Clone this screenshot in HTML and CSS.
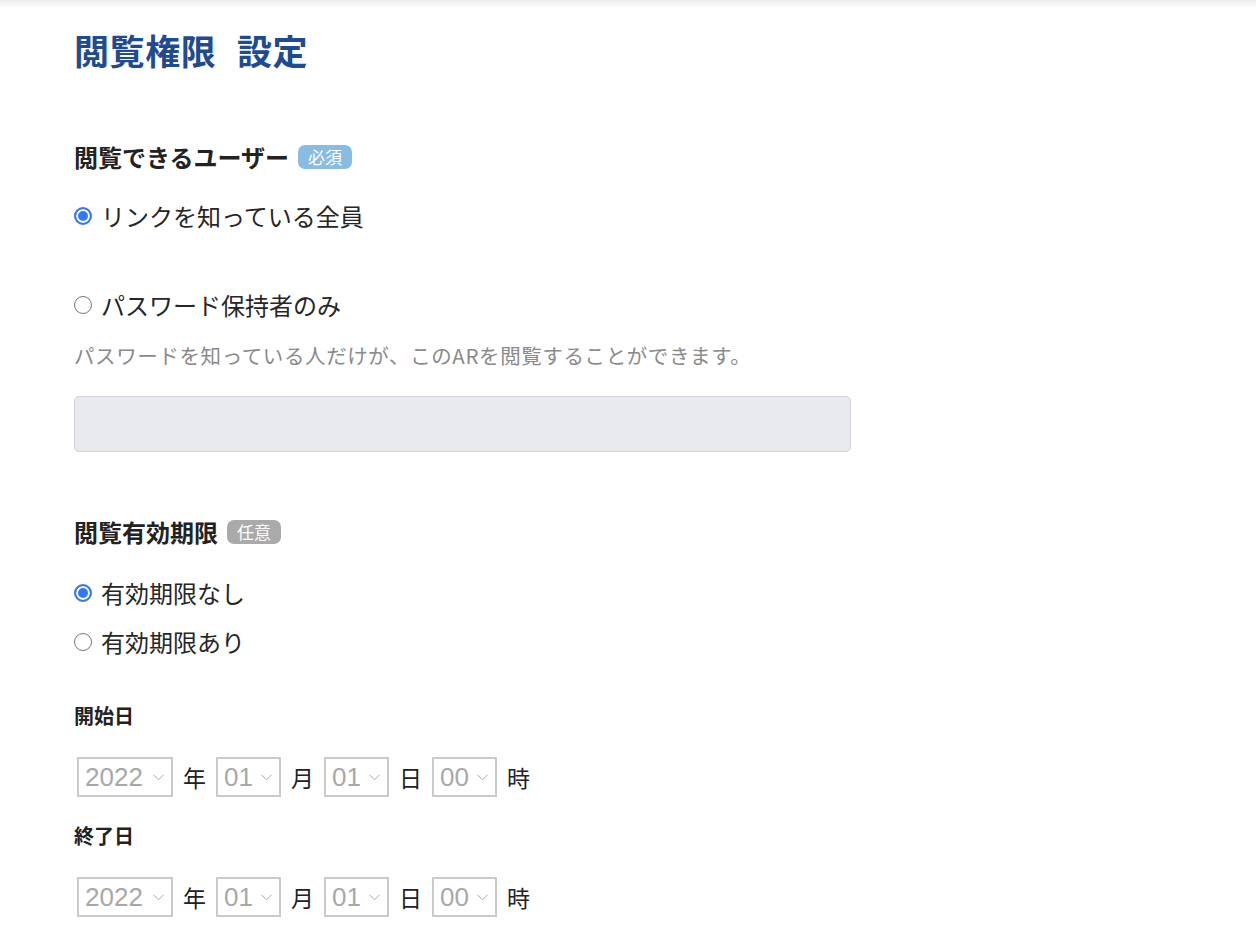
FILE: index.html
```html
<!DOCTYPE html>
<html lang="ja">
<head>
<meta charset="utf-8">
<title>閲覧権限 設定</title>
<link rel="stylesheet" href="styles.css">
</head>
<body>
<div class="top-shade"></div>
<main class="page">
  <h1 class="title">閲覧権限 設定</h1>

  <section class="section">
    <h2 class="heading">閲覧できるユーザー<span class="badge badge-required">必須</span></h2>
    <label class="radio radio-first"><input type="radio" name="viewer" checked><span>リンクを知っている全員</span></label>
    <label class="radio radio-pass"><input type="radio" name="viewer"><span>パスワード保持者のみ</span></label>
    <p class="desc">パスワードを知っている人だけが、このARを閲覧することができます。</p>
    <input class="text-input" type="text" disabled>
  </section>

  <section class="section section-expiry">
    <h2 class="heading">閲覧有効期限<span class="badge badge-optional">任意</span></h2>
    <label class="radio radio-first2"><input type="radio" name="expiry" checked><span>有効期限なし</span></label>
    <label class="radio radio-second2"><input type="radio" name="expiry"><span>有効期限あり</span></label>

    <h3 class="sub-label sub-start">開始日</h3>
    <div class="date-row">
      <div class="select select-year"><span class="val">2022</span><svg class="chev" width="11" height="7" viewBox="0 0 11 7"><polyline points="0.5,0.8 5.5,5.8 10.5,0.8" fill="none" stroke="#a8a8a8" stroke-width="1"/></svg></div>
      <span class="unit">年</span>
      <div class="select"><span class="val">01</span><svg class="chev" width="11" height="7" viewBox="0 0 11 7"><polyline points="0.5,0.8 5.5,5.8 10.5,0.8" fill="none" stroke="#a8a8a8" stroke-width="1"/></svg></div>
      <span class="unit">月</span>
      <div class="select"><span class="val">01</span><svg class="chev" width="11" height="7" viewBox="0 0 11 7"><polyline points="0.5,0.8 5.5,5.8 10.5,0.8" fill="none" stroke="#a8a8a8" stroke-width="1"/></svg></div>
      <span class="unit">日</span>
      <div class="select"><span class="val">00</span><svg class="chev" width="11" height="7" viewBox="0 0 11 7"><polyline points="0.5,0.8 5.5,5.8 10.5,0.8" fill="none" stroke="#a8a8a8" stroke-width="1"/></svg></div>
      <span class="unit">時</span>
    </div>

    <h3 class="sub-label sub-end">終了日</h3>
    <div class="date-row">
      <div class="select select-year"><span class="val">2022</span><svg class="chev" width="11" height="7" viewBox="0 0 11 7"><polyline points="0.5,0.8 5.5,5.8 10.5,0.8" fill="none" stroke="#a8a8a8" stroke-width="1"/></svg></div>
      <span class="unit">年</span>
      <div class="select"><span class="val">01</span><svg class="chev" width="11" height="7" viewBox="0 0 11 7"><polyline points="0.5,0.8 5.5,5.8 10.5,0.8" fill="none" stroke="#a8a8a8" stroke-width="1"/></svg></div>
      <span class="unit">月</span>
      <div class="select"><span class="val">01</span><svg class="chev" width="11" height="7" viewBox="0 0 11 7"><polyline points="0.5,0.8 5.5,5.8 10.5,0.8" fill="none" stroke="#a8a8a8" stroke-width="1"/></svg></div>
      <span class="unit">日</span>
      <div class="select"><span class="val">00</span><svg class="chev" width="11" height="7" viewBox="0 0 11 7"><polyline points="0.5,0.8 5.5,5.8 10.5,0.8" fill="none" stroke="#a8a8a8" stroke-width="1"/></svg></div>
      <span class="unit">時</span>
    </div>
  </section>
</main>
</body>
</html>
```

FILE: styles.css
```css
* { box-sizing: border-box; }

html, body {
  margin: 0;
  padding: 0;
  background: #ffffff;
}

body {
  font-family: "Noto Sans CJK JP", "Noto Sans", sans-serif;
  color: #222222;
  overflow: hidden;
}

.top-shade {
  height: 8px;
  background: linear-gradient(#ececec, rgba(255,255,255,0));
  margin-bottom: -8px;
}

.page {
  padding: 25px 0 0 74px;
}

.title {
  margin: 0;
  font-size: 35px;
  line-height: 50px;
  font-weight: 700;
  color: #1e4b92;
  letter-spacing: 0.6px;
  word-spacing: 12px;
}

.section {
  display: flex;
  flex-direction: column;
  align-items: flex-start;
}

.heading {
  display: flex;
  align-items: center;
  margin: 67px 0 0 0;
  font-size: 24px;
  line-height: 30px;
  font-weight: 700;
  color: #222222;
}

.section-expiry .heading {
  margin-top: 65px;
}

.badge {
  display: inline-flex;
  align-items: center;
  justify-content: center;
  margin-left: 9px;
  height: 24px;
  padding: 0 10px;
  border-radius: 7px;
  font-size: 17px;
  font-weight: 400;
  color: #ffffff;
  line-height: 24px;
}

.badge-required { background: #89bce2; }
.badge-optional { background: #aaaaaa; }

.radio {
  display: flex;
  align-items: center;
  gap: 9px;
  font-size: 24px;
  line-height: 30px;
  color: #262626;
  cursor: pointer;
}

.radio input {
  appearance: none;
  -webkit-appearance: none;
  margin: 0;
  width: 18px;
  height: 18px;
  border-radius: 50%;
  border: 1.5px solid #777777;
  background: #ffffff;
  flex: none;
}

.radio input:checked {
  border: 2px solid #3478f6;
  background: #3478f6;
  box-shadow: inset 0 0 0 2px #ffffff;
}

.radio-first { margin-top: 29px; }
.radio-pass { margin-top: 59px; }
.radio-first2 { margin-top: 31px; }
.radio-second2 { margin-top: 19px; }

.desc {
  margin: 22px 0 0 0;
  font-size: 20.5px;
  line-height: 26px;
  letter-spacing: 0.6px;
  color: #8a8a8a;
}

.text-input {
  margin-top: 28px;
  width: 777px;
  height: 56px;
  border: 1px solid #cfd2d6;
  border-radius: 5px;
  background: #e9eaee;
  font: inherit;
}

.sub-label {
  margin: 0;
  font-size: 20px;
  line-height: 26px;
  font-weight: 700;
  color: #222222;
}

.sub-start { margin-top: 46px; }
.sub-end { margin-top: 26px; }

.date-row {
  display: flex;
  align-items: center;
  gap: 10px;
  margin-top: 28px;
  padding-left: 3px;
}

.select {
  display: flex;
  align-items: center;
  justify-content: space-between;
  width: 65px;
  height: 40px;
  padding: 0 7px 0 6px;
  border: 2px solid #cacaca;
  background: #ffffff;
}

.select-year {
  width: 96px;
}

.val {
  font-family: "Liberation Sans", Arial, sans-serif;
  font-size: 26px;
  line-height: 36px;
  color: #a8a8a8;
}

.chev {
  display: block;
  flex: none;
}

.unit {
  font-size: 23px;
  line-height: 30px;
  color: #222222;
}
```
